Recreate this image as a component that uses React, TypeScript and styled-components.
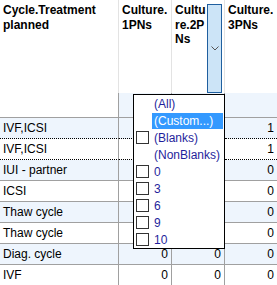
import React from 'react';
import styled, { createGlobalStyle } from 'styled-components';

const GlobalStyle = createGlobalStyle`
  html, body {
    margin: 0;
    padding: 0;
    background: #fff;
  }
  body {
    font-family: "Liberation Sans", Arial, sans-serif;
    font-size: 12px;
    color: #000;
    overflow: hidden;
  }
`;

const Grid = styled.div`
  position: relative;
  display: grid;
  grid-template-columns: 119px 53px 53px 52px;
  width: 277px;
  height: 285px;
  overflow: hidden;
`;

const HeaderCell = styled.div<{ $last?: boolean }>`
  display: flex;
  height: 93px;
  box-sizing: border-box;
  border-right: ${p => (p.$last ? 'none' : '1px solid #e3e3e3')};
`;

const HeaderText = styled.div<{ $narrow?: boolean }>`
  padding: 3px 0 0 3px;
  width: ${p => (p.$narrow ? '32px' : 'auto')};
  flex: ${p => (p.$narrow ? '0 0 auto' : '1')};
  font-weight: bold;
  line-height: 14.5px;
  overflow-wrap: anywhere;
`;

const FilterButton = styled.div`
  width: 15px;
  margin: 4px 2px 0 0;
  box-sizing: border-box;
  background: #cce4f7;
  border: 1px solid #1f5f9f;
  display: flex;
  align-items: center;
  justify-content: center;
`;

const Cell = styled.div<{ $alt?: boolean; $num?: boolean; $dotted?: boolean; $last?: boolean; $h?: number }>`
  height: ${p => p.$h ?? 21}px;
  box-sizing: border-box;
  padding: 0 3px;
  line-height: 20px;
  white-space: nowrap;
  overflow: hidden;
  text-align: ${p => (p.$num ? 'right' : 'left')};
  background: ${p => (p.$alt ? '#eef5fd' : '#fff')};
  border-right: ${p => (p.$last ? 'none' : '1px solid #a0a0a0')};
  border-bottom: ${p => (p.$dotted ? '1px dotted #000' : '1px solid #a0a0a0')};
`;

const FilterPopup = styled.div`
  position: absolute;
  left: 133px;
  top: 94px;
  width: 92px;
  height: 155px;
  box-sizing: border-box;
  border: 1px solid #000;
  background: #fff;
  z-index: 2;
`;

const PopupItem = styled.div`
  display: flex;
  align-items: center;
  height: 17px;
`;

const Check = styled.span<{ $hidden?: boolean }>`
  flex: 0 0 auto;
  width: 13px;
  height: 13px;
  margin: 0 3px 0 2px;
  box-sizing: border-box;
  border: 1px solid ${p => (p.$hidden ? 'transparent' : '#333')};
`;

const ItemLabel = styled.span<{ $active?: boolean }>`
  flex: 1;
  height: 16px;
  line-height: 16px;
  padding-left: 2px;
  margin-right: 1px;
  white-space: nowrap;
  color: ${p => (p.$active ? '#fff' : '#1f1f9c')};
  background: ${p => (p.$active ? '#3399ff' : 'transparent')};
`;

const Chevron = () => (
  <svg width="8" height="5" viewBox="0 0 8 5">
    <path d="M0.5 0.5 L4 4 L7.5 0.5" fill="none" stroke="#555" strokeWidth="1" />
  </svg>
);

// values under the open filter list are not drawn
const rows: [string, number | null, number | null, number][] = [
  ['IVF,ICSI', null, null, 1],
  ['IVF,ICSI', null, null, 1],
  ['IUI - partner', null, null, 0],
  ['ICSI', null, null, 0],
  ['Thaw cycle', null, null, 0],
  ['Thaw cycle', null, null, 0],
  ['Diag. cycle', 0, 0, 0],
  ['IVF', 0, 0, 0],
];

const filterItems: { label: string; check: boolean; active?: boolean }[] = [
  { label: '(All)', check: false },
  { label: '(Custom...)', check: false, active: true },
  { label: '(Blanks)', check: true },
  { label: '(NonBlanks)', check: false },
  { label: '0', check: true },
  { label: '3', check: true },
  { label: '6', check: true },
  { label: '9', check: true },
  { label: '10', check: true },
];

export default function App() {
  return (
    <>
      <GlobalStyle />
      <Grid>
        <HeaderCell>
          <HeaderText>Cycle.Treatment planned</HeaderText>
        </HeaderCell>
        <HeaderCell>
          <HeaderText>Culture.1PNs</HeaderText>
        </HeaderCell>
        <HeaderCell>
          <HeaderText $narrow>Culture.2PNs</HeaderText>
          <FilterButton>
            <Chevron />
          </FilterButton>
        </HeaderCell>
        <HeaderCell $last>
          <HeaderText>Culture.3PNs</HeaderText>
        </HeaderCell>

        <Cell $h={25} />
        <Cell $h={25} $alt />
        <Cell $h={25} $alt />
        <Cell $h={25} $alt $last />

        {rows.map(([name, a, b, c], i) => {
          const alt = i % 2 === 0;
          const dotted = i === 0 || i === 1;
          return (
            <React.Fragment key={i}>
              <Cell $alt={alt} $dotted={dotted}>{name}</Cell>
              <Cell $alt={alt} $dotted={dotted} $num>{a}</Cell>
              <Cell $alt={alt} $dotted={dotted} $num>{b}</Cell>
              <Cell $alt={alt} $dotted={dotted} $num $last>{c}</Cell>
            </React.Fragment>
          );
        })}

        <FilterPopup>
          {filterItems.map(item => (
            <PopupItem key={item.label}>
              <Check $hidden={!item.check} />
              <ItemLabel $active={item.active}>{item.label}</ItemLabel>
            </PopupItem>
          ))}
        </FilterPopup>
      </Grid>
    </>
  );
}
